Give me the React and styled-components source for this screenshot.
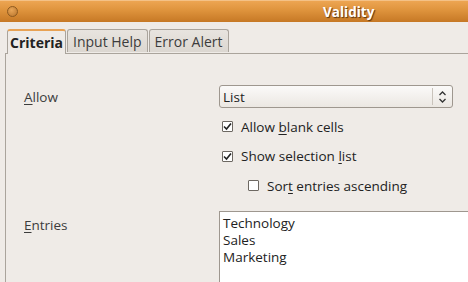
import React from 'react'
import styled, { createGlobalStyle } from 'styled-components'

const GlobalStyle = createGlobalStyle`
	html, body {
		margin: 0;
		padding: 0;
		background: #efebe7;
		overflow: hidden;
	}
	body {
		font-family: 'Open Sans', 'DejaVu Sans', sans-serif;
		font-size: 13.5px;
		color: #3c3c3c;
	}
`

const Window = styled.div`
	width: 468px;
	height: 282px;
	background: #efebe7;
	overflow: hidden;
	display: flex;
	flex-direction: column;
`
const TitleBar = styled.div`
	height: 22px;
	flex: none;
	background: linear-gradient(#eda552 0%, #de933c 45%, #c67825 100%);
	border-top: 1px solid #f4c186;
	box-sizing: border-box;
	position: relative;
	display: flex;
	align-items: center;
`
const CloseDot = styled.span`
	width: 9px;
	height: 9px;
	margin-left: 7px;
	border-radius: 50%;
	border: 1px solid #8e5a20;
	background: radial-gradient(circle at 40% 35%, #e9a658, #b8742b);
`
const Title = styled.span`
	position: absolute;
	left: 323px;
	top: 2px;
	font-family: 'Open Sans', 'DejaVu Sans', sans-serif;
	font-weight: bold;
	font-size: 13.5px;
	color: #ffffff;
	text-shadow: 1px 1px 1px #5a3510;
`
const TabStrip = styled.div`
	display: flex;
	align-items: flex-end;
	padding: 6px 0 0 7px;
	height: 31px;
	box-sizing: border-box;
	flex: none;
`
const Tab = styled.div`
	box-sizing: border-box;
	height: ${(p) => (p.active ? '25px' : '23px')};
	padding: 0 ${(p) => (p.active ? '2px' : '5px')};
	margin-right: 1px;
	display: flex;
	align-items: center;
	font-size: 14px;
	font-weight: ${(p) => (p.active ? 'bold' : 'normal')};
	color: ${(p) => (p.active ? '#222' : '#3c3c3c')};
	border: 1px solid #aaa49c;
	border-bottom: none;
	border-radius: 3px 3px 0 0;
	border-top: ${(p) => (p.active ? '2px solid #e8a254' : '1px solid #aaa49c')};
	background: ${(p) =>
		p.active ? '#efebe7' : 'linear-gradient(#e8e4df, #dcd7d1)'};
	position: relative;
	top: ${(p) => (p.active ? '1px' : '0')};
	margin-bottom: ${(p) => (p.active ? '0' : '1px')};
	z-index: ${(p) => (p.active ? 2 : 1)};
`
const Panel = styled.div`
	flex: 1;
	margin-left: 5px;
	border-left: 1px solid #aaa49c;
	border-top: 1px solid #aaa49c;
	padding: 31px 0 0 18px;
	box-sizing: border-box;
`
const Row = styled.div`
	display: grid;
	grid-template-columns: 195px 1fr;
	align-items: ${(p) => (p.top ? 'start' : 'center')};
	margin-top: ${(p) => p.offset || 0}px;
	margin-bottom: ${(p) => p.gap || 0}px;
`
const Label = styled.span`
	padding-top: ${(p) => (p.top ? '5px' : '0')};
`
const Key = styled.span`
	text-decoration: underline;
	text-underline-offset: 2px;
`
const Select = styled.div`
	width: 234px;
	height: 23px;
	box-sizing: border-box;
	border: 1px solid #9e978f;
	border-radius: 3px;
	background: linear-gradient(#fbfaf9, #ebe7e2);
	display: flex;
	align-items: center;
	padding-left: 3px;
	color: #222;
`
const SelectText = styled.span`
	flex: 1;
`
const Spinner = styled.span`
	width: 19px;
	height: 17px;
	border-left: 1px solid #c9c3bb;
	display: flex;
	align-items: center;
	justify-content: center;
`
const Options = styled.div`
	margin: 1px 0 0 198px;
	display: flex;
	flex-direction: column;
`
const Option = styled.label`
	display: flex;
	align-items: center;
	height: 29.5px;
	padding-left: ${(p) => p.indent || 0}px;
	color: #222;
`
const Box = styled.span`
	width: 11px;
	height: 11px;
	box-sizing: border-box;
	border: 1px solid #6d6862;
	background: #fff;
	border-radius: 1px;
	margin-right: 8px;
	display: flex;
	align-items: center;
	justify-content: center;
`
const ListBox = styled.div`
	width: 260px;
	height: 80px;
	box-sizing: border-box;
	border: 1px solid #9e978f;
	border-right: none;
	border-bottom: none;
	background: #fff;
	padding: 3px 3px;
	line-height: 17px;
	color: #222;
`

const Check = () => (
	<svg width="9" height="9" viewBox="0 0 9 9">
		<path d="M1 4.5 L3.5 7 L8 1.5" fill="none" stroke="#222" strokeWidth="1.6" />
	</svg>
)

const Arrows = () => (
	<svg width="9" height="14" viewBox="0 0 9 14">
		<path d="M1.5 5 L4.5 2 L7.5 5 M1.5 9 L4.5 12 L7.5 9" fill="none" stroke="#333" strokeWidth="1.3" />
	</svg>
)

const App = () => (
	<Window>
		<GlobalStyle />
		<TitleBar>
			<CloseDot />
			<Title>Validity</Title>
		</TitleBar>
		<TabStrip>
			<Tab active>Criteria</Tab>
			<Tab>Input Help</Tab>
			<Tab>Error Alert</Tab>
		</TabStrip>
		<Panel>
			<Row gap={4}>
				<Label>
					<Key>A</Key>llow
				</Label>
				<Select>
					<SelectText>List</SelectText>
					<Spinner>
						<Arrows />
					</Spinner>
				</Select>
			</Row>
			<Options>
				<Option>
					<Box><Check /></Box>
					<span>Allow <Key>b</Key>lank cells</span>
				</Option>
				<Option>
					<Box><Check /></Box>
					<span>Show selection <Key>l</Key>ist</span>
				</Option>
				<Option indent={26}>
					<Box />
					<span>Sor<Key>t</Key> entries ascending</span>
				</Option>
			</Options>
			<Row top offset={10}>
				<Label top>
					<Key>E</Key>ntries
				</Label>
				<ListBox>
					<div>Technology</div>
					<div>Sales</div>
					<div>Marketing</div>
				</ListBox>
			</Row>
		</Panel>
	</Window>
)

export default App
